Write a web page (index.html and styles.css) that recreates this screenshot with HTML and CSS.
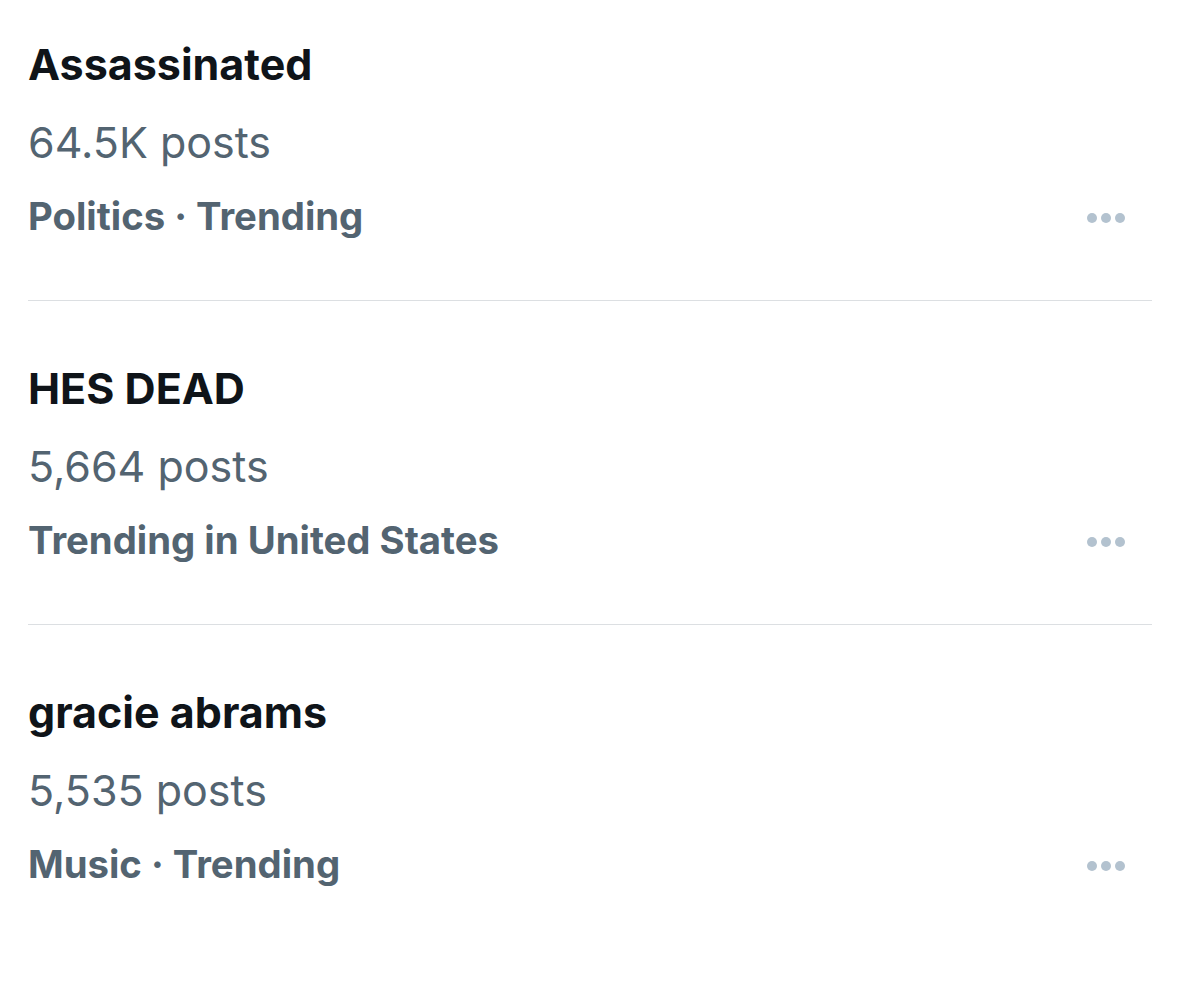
FILE: index.html
```html
<!DOCTYPE html>
<html lang="en">
<head>
<meta charset="utf-8">
<link rel="stylesheet" href="styles.css">
</head>
<body>
<div class="list">
  <div class="trend first">
    <div class="text">
      <div class="title">Assassinated</div>
      <div class="count">64.5K posts</div>
      <div class="meta">Politics · Trending</div>
    </div>
    <div class="more"><span></span><span></span><span></span></div>
  </div>
  <div class="trend">
    <div class="text">
      <div class="title">HES DEAD</div>
      <div class="count">5,664 posts</div>
      <div class="meta">Trending in United States</div>
    </div>
    <div class="more"><span></span><span></span><span></span></div>
  </div>
  <div class="trend last">
    <div class="text">
      <div class="title">gracie abrams</div>
      <div class="count">5,535 posts</div>
      <div class="meta">Music · Trending</div>
    </div>
    <div class="more"><span></span><span></span><span></span></div>
  </div>
</div>
</body>
</html>
```
FILE: styles.css
```css
html, body {
  margin: 0;
  padding: 0;
  background: #ffffff;
}
body {
  font-family: Inter, "Noto Sans", sans-serif;
  width: 1179px;
  height: 981px;
  overflow: hidden;
}
.list {
  padding: 0 27px 0 28px;
}
.trend {
  display: flex;
  align-items: flex-start;
  justify-content: space-between;
  height: 324px;
  border-bottom: 1px solid #dcdfe2;
  box-sizing: border-box;
  padding-top: 55px;
}
.trend.first {
  height: 301px;
  padding-top: 32px;
}
.trend.last {
  border-bottom: none;
}
.text {
  display: flex;
  flex-direction: column;
}
.title {
  font-size: 43px;
  font-weight: 700;
  color: #0f1419;
  line-height: 64px;
}
.count {
  font-size: 43px;
  font-weight: 400;
  color: #536471;
  line-height: 78px;
  margin-top: 7px;
}
.meta {
  font-size: 38.3px;
  font-weight: 700;
  color: #536471;
  line-height: 70px;
}
.more {
  display: flex;
  gap: 4px;
  margin-top: 181px;
  margin-right: 27px;
}
.more span {
  width: 10px;
  height: 10px;
  border-radius: 50%;
  background: #b3c2cf;
}
```
